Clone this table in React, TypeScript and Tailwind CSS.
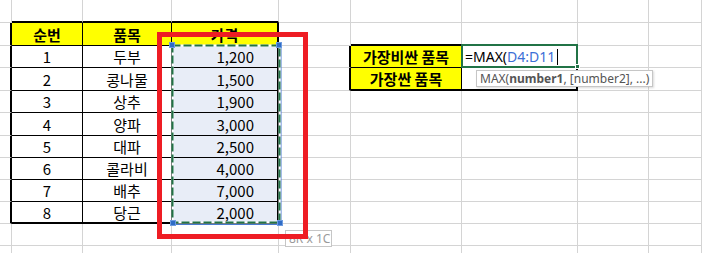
import React from "react";

const COLS = ["12px", "71px", "89px", "107px", "72px", "111px", "116px", "71px", "53px"];
const ROWS = [23, 23, 22, 23, 22, 23, 22, 22, 22, 22, 22, 8];

const R = {
  g1: "border-r border-r-[#d4d4d4]",
  b1: "border-r border-r-black",
  b2: "border-r-2 border-r-black",
};
const B = {
  g1: "border-b border-b-[#d4d4d4]",
  b1: "border-b border-b-black",
  b2: "border-b-2 border-b-black",
};

type K = "g1" | "b1" | "b2";

const names = ["두부", "콩나물", "상추", "양파", "대파", "콜라비", "배추", "당근"];
const prices = ["1,200", "1,500", "1,900", "3,000", "2,500", "4,000", "7,000", "2,000"];

function cellInfo(r: number, c: number): { rb: K; bb: K; bg: string; content: React.ReactNode; align: string } {
  let rb: K = "g1";
  let bb: K = "g1";
  let bg = "bg-white";
  let content: React.ReactNode = null;
  let align = "justify-center";

  const inMain = r >= 1 && r <= 9 && c >= 1 && c <= 3;
  if (inMain) {
    rb = c === 3 ? "b2" : "b1";
    bb = r === 9 ? "b2" : "b1";
  }
  if (r === 0 && c >= 1 && c <= 3) bb = "b2";
  if (c === 0 && r >= 1 && r <= 9) rb = "b2";

  const inSide = r >= 2 && r <= 3 && (c === 5 || c === 6);
  if (inSide) {
    rb = c === 6 ? "b2" : "b1";
    bb = r === 3 ? "b2" : "b1";
  }
  if (r === 1 && (c === 5 || c === 6)) bb = "b2";
  if (c === 4 && (r === 2 || r === 3)) rb = "b2";

  if (r === 1 && c >= 1 && c <= 3) {
    bg = "bg-[#ffff00]";
    content = <span className="font-bold">{["순번", "품목", "가격"][c - 1]}</span>;
  }
  if (r >= 2 && r <= 9) {
    const i = r - 2;
    if (c === 1) content = <span>{i + 1}</span>;
    if (c === 2) content = <span>{names[i]}</span>;
    if (c === 3) {
      bg = "bg-[#e8edf7]";
      content = <span>{prices[i]}</span>;
      align = "justify-end pr-[23px]";
    }
  }
  if (c === 5 && r === 2) {
    bg = "bg-[#ffff00]";
    content = <span className="font-bold">가장비싼 품목</span>;
  }
  if (c === 5 && r === 3) {
    bg = "bg-[#ffff00]";
    content = <span className="font-bold">가장싼 품목</span>;
  }
  if (c === 6 && r === 2) {
    align = "justify-start pl-[3px]";
    content = (
      <span className="flex items-center font-['Noto_Sans',sans-serif] text-[14px]">
        <span className="text-black">=MAX(</span>
        <span className="text-[#3c6fd6]">D4:D11</span>
        <span className="ml-[2px] inline-block h-[16px] w-px bg-black" />
      </span>
    );
  }
  return { rb, bb, bg, content, align };
}

export default function App() {
  const cells: React.ReactNode[] = [];
  ROWS.forEach((_, r) => {
    COLS.forEach((_, c) => {
      const info = cellInfo(r, c);
      cells.push(
        <div
          key={`${r}-${c}`}
          className={`flex items-center overflow-hidden whitespace-nowrap leading-none ${R[info.rb]} ${B[info.bb]} ${info.bg} ${info.align}`}
        >
          {info.content}
        </div>
      );
    });
  });

  return (
    <div className="relative h-[253px] w-[702px] overflow-hidden bg-white font-['Noto_Sans_CJK_KR','Noto_Sans',sans-serif] text-[15px] text-black">
      <div
        className="grid"
        style={{
          gridTemplateColumns: COLS.join(" "),
          gridTemplateRows: ROWS.map((h) => `${h}px`).join(" "),
        }}
      >
        {cells}
      </div>

      {/* selection marching ants */}
      <svg className="absolute left-[170px] top-[43px]" width="113" height="184" viewBox="0 0 113 184">
        <line x1="111" y1="2" x2="111" y2="181.5" stroke="#4a7bd0" strokeWidth="1" />
        <line x1="2" y1="181.5" x2="111" y2="181.5" stroke="#4a7bd0" strokeWidth="1" />
        <rect x="2.5" y="2.5" width="107" height="177" fill="none" stroke="#ffffff" strokeWidth="2" />
        <rect x="2.5" y="2.5" width="107" height="177" fill="none" stroke="#217346" strokeWidth="2" strokeDasharray="8 3" />
      </svg>
      <div className="absolute left-[169px] top-[42px] h-[6px] w-[6px] border border-[#6d9be0] bg-[#2f6cc6]" />
      <div className="absolute left-[276px] top-[42px] h-[6px] w-[6px] border border-[#6d9be0] bg-[#2f6cc6]" />
      <div className="absolute left-[170px] top-[220px] h-[6px] w-[6px] border border-[#6d9be0] bg-[#2f6cc6]" />
      <div className="absolute left-[277px] top-[220px] h-[6px] w-[6px] border border-[#6d9be0] bg-[#2f6cc6]" />

      {/* active formula cell */}
      <div className="absolute left-[461px] top-[44px] h-[24px] w-[117px] border-2 border-[#217346]" />
      <div className="absolute left-[575px] top-[64px] h-[5px] w-[5px] border border-white bg-[#217346]" />

      {/* function tooltip */}
      <div className="absolute left-[476px] top-[70px] flex h-[17px] w-[177px] items-center whitespace-pre border border-[#c6c6c6] bg-white pl-[3px] font-['Noto_Sans',sans-serif] text-[12px] leading-none text-[#555555] shadow-[1px_1px_2px_rgba(0,0,0,0.15)]">
        <span className="whitespace-pre">
          MAX(<b>number1</b>, [number2], ...)
        </span>
      </div>

      {/* size tooltip */}
      <div className="absolute left-[285px] top-[230px] flex h-[17px] w-[47px] items-center whitespace-nowrap border border-[#c6c6c6] bg-white pl-[3px] font-['Noto_Sans',sans-serif] text-[12px] leading-none text-[#9a9a9a]">
        8R x 1C
      </div>

      {/* red highlight box */}
      <div className="absolute left-[157px] top-[32px] h-[207px] w-[151px] border-[5px] border-[#ee1d24]" />
    </div>
  );
}
